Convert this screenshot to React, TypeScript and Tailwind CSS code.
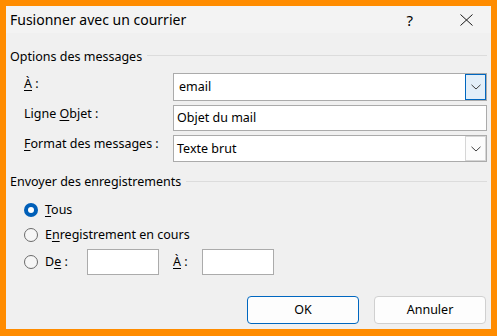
import React from "react";

function Chevron() {
  return (
    <svg width="10" height="6" viewBox="0 0 10 6" fill="none">
      <path d="M0.5 0.8 L5 5 L9.5 0.8" stroke="#404040" strokeWidth="1" />
    </svg>
  );
}

function Radio({ checked }: { checked?: boolean }) {
  if (checked) {
    return (
      <div className="w-[14px] h-[14px] rounded-full bg-[#005fb8] flex items-center justify-center shrink-0">
        <div className="w-[6px] h-[6px] rounded-full bg-white" />
      </div>
    );
  }
  return <div className="w-[14px] h-[14px] rounded-full border border-[#6b6b6b] bg-[#f6f6f6] shrink-0" />;
}

export default function App() {
  return (
    <div className="w-[497px] h-[336px] bg-[#ff8c00] pt-[6px] pl-[6px] pr-[6px] pb-[7px] font-['Noto_Sans',sans-serif] text-[12.5px] text-black">
      <div className="w-full h-full bg-[#f0f0f0] flex flex-col">
        {/* Title bar */}
        <div className="h-[27px] bg-[#f3f3f3] flex items-center pl-[4px] pr-[18px]">
          <span className="flex-1 text-[14px] leading-[20px]">Fusionner avec un courrier</span>
          <span className="text-[15px] leading-[20px] mr-[47px]">?</span>
          <svg width="13" height="12" viewBox="0 0 13 12" fill="none">
            <path d="M0.5 0.5 L12.5 11.5 M12.5 0.5 L0.5 11.5" stroke="#1a1a1a" strokeWidth="1" />
          </svg>
        </div>
        <div className="flex-1 bg-[#f0f0f0] flex flex-col pl-[4px] pr-[4px]">
          {/* Group header 1 */}
          <div className="mt-[14px] h-[20px] flex items-center">
            <span className="leading-[16px]">Options des messages</span>
            <div className="flex-1 h-px bg-[#dcdcdc] ml-[5px] mb-[4px]" />
          </div>
          {/* Rows */}
          <div className="mt-[6px] pl-[14px] flex flex-col gap-[4px]">
            <div className="flex items-start h-[28px]">
              <span className="w-[149px] leading-[16px] pt-[3px]">
                <span className="underline underline-offset-2">À</span> :
              </span>
              <div className="flex-1 h-full bg-white border border-[#ababab] flex items-center">
                <span className="flex-1 pl-[5px] leading-[16px]">email</span>
                <div className="w-[21px] h-full border border-[#0067c0] bg-[#e3eff9] flex items-center justify-center">
                  <Chevron />
                </div>
              </div>
            </div>
            <div className="flex items-start h-[26px]">
              <span className="w-[149px] leading-[16px] pt-[1px]">
                Ligne <span className="underline underline-offset-2">O</span>bjet :
              </span>
              <div className="flex-1 h-full bg-white border border-[#ababab] flex items-center">
                <span className="pl-[3px] leading-[16px]">Objet du mail</span>
              </div>
            </div>
            <div className="flex items-start h-[27px]">
              <span className="w-[149px] leading-[16px] pt-[1px]">
                <span className="underline underline-offset-2">F</span>ormat des messages :
              </span>
              <div className="flex-1 h-full bg-white border border-[#ababab] flex items-center">
                <span className="flex-1 pl-[3px] leading-[16px]">Texte brut</span>
                <div className="w-[21px] h-full border border-[#d6d6d6] bg-[#fcfcfc] flex items-center justify-center">
                  <Chevron />
                </div>
              </div>
            </div>
          </div>
          {/* Group header 2 */}
          <div className="mt-[10px] h-[20px] flex items-center">
            <span className="leading-[16px]">Envoyer des enregistrements</span>
            <div className="flex-1 h-px bg-[#dcdcdc] ml-[5px] mb-[2px]" />
          </div>
          {/* Radios */}
          <div className="pl-[14px] flex flex-col">
            <div className="mt-[11px] h-[14px] flex items-center gap-[7px]">
              <Radio checked />
              <span className="leading-[16px]">
                <span className="underline underline-offset-2">T</span>ous
              </span>
            </div>
            <div className="mt-[11px] h-[14px] flex items-center gap-[7px]">
              <Radio />
              <span className="leading-[16px]">
                E<span className="underline underline-offset-2">n</span>registrement en cours
              </span>
            </div>
            <div className="mt-[7px] h-[26px] flex items-center">
              <Radio />
              <span className="leading-[16px] ml-[7px] w-[42px]">
                D<span className="underline underline-offset-2">e</span> :
              </span>
              <div className="w-[72px] h-full bg-white border border-[#ababab]" />
              <span className="leading-[16px] ml-[14px] w-[29px]">
                <span className="underline underline-offset-2">À</span> :
              </span>
              <div className="w-[72px] h-full bg-white border border-[#ababab]" />
            </div>
          </div>
          {/* Buttons */}
          <div className="mt-[21px] h-[28px] flex justify-end gap-[15px] pr-[1px]">
            <button className="w-[112px] h-full rounded-[4px] border border-[#0067c0] bg-[#fdfdfd] leading-[16px]">OK</button>
            <button className="w-[112px] h-full rounded-[4px] border border-[#d0d0d0] bg-[#fdfdfd] leading-[16px]">Annuler</button>
          </div>
        </div>
      </div>
    </div>
  );
}
